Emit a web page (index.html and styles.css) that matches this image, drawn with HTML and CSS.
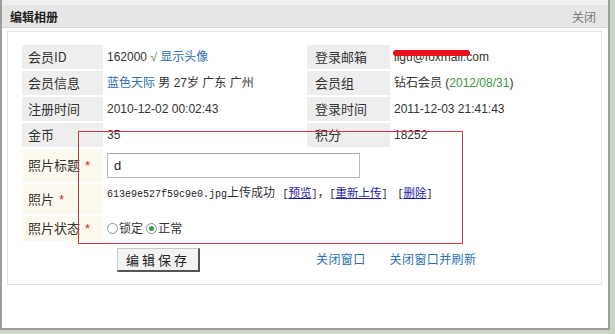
FILE: index.html
```html
<!DOCTYPE html>
<html>
<head>
<meta charset="utf-8">
<title>编辑相册</title>
<link rel="stylesheet" href="styles.css">
</head>
<body>
<div class="dialog">
  <div class="header">
    <span class="title">编辑相册</span>
    <span class="close">关闭</span>
  </div>
  <div class="panel">
    <table class="info">
      <colgroup><col class="c1"><col class="c2"><col class="c3"><col></colgroup>
      <tr class="r">
        <td class="lbl">会员ID</td>
        <td class="val">162000 <span class="ok">√</span> <a class="blue">显示头像</a></td>
        <td class="lbl lbl2">登录邮箱</td>
        <td class="val"><span class="email">ligu@foxmail.com<span class="redact"></span></span></td>
      </tr>
      <tr class="r">
        <td class="lbl">会员信息</td>
        <td class="val"><a class="blue">蓝色天际</a> 男 27岁 广东 广州</td>
        <td class="lbl lbl2">会员组</td>
        <td class="val">钻石会员 (<span class="green">2012/08/31</span>)</td>
      </tr>
      <tr class="r">
        <td class="lbl">注册时间</td>
        <td class="val">2010-12-02 00:02:43</td>
        <td class="lbl lbl2">登录时间</td>
        <td class="val">2011-12-03 21:41:43</td>
      </tr>
      <tr class="r">
        <td class="lbl">金币</td>
        <td class="val">35</td>
        <td class="lbl lbl2">积分</td>
        <td class="val">18252</td>
      </tr>
      <tr class="r5">
        <td class="lbl cream">照片标题<span class="star">*</span></td>
        <td class="val" colspan="3"><input class="text-input" type="text" value="d"></td>
      </tr>
      <tr class="r6">
        <td class="lbl cream">照片<span class="star">*</span></td>
        <td class="val top" colspan="3"><span class="mono">613e9e527f59c9e0.jpg</span>上传成功 <span class="gap"></span><span class="mono">[</span><a class="ul">预览</a><span class="mono">]</span>，<span class="mono">[</span><a class="ul">重新上传</a><span class="mono">]</span><span class="gap2"></span><span class="mono">[</span><a class="ul">删除</a><span class="mono">]</span></td>
      </tr>
      <tr class="r7">
        <td class="lbl cream">照片状态<span class="star">*</span></td>
        <td class="val" colspan="3"><span class="radio"></span>锁定 <span class="radio on"></span>正常</td>
      </tr>
      <tr class="rf">
        <td></td>
        <td class="val"><button class="btn" type="button">编辑保存</button></td>
        <td colspan="2" class="links"><a class="blue">关闭窗口</a><a class="blue">关闭窗口并刷新</a></td>
      </tr>
    </table>
  </div>
  <div class="annot"></div>
</div>
</body>
</html>
```
FILE: styles.css
```css
html, body { margin: 0; padding: 0; }
body {
  background: #c9d6c4;
  font-family: "Liberation Sans", "Noto Sans CJK SC", sans-serif;
  font-size: 12px;
  color: #333;
}
.dialog {
  position: relative;
  width: 606px;
  height: 328px;
  border: 2px solid #9d9d9d;
  border-top: 0;
  background: #fff;
}
.header {
  height: 22px;
  border-top: 5px solid #efefef;
  border-bottom: 1px solid #dadada;
  background: #e6e6e6;
  display: flex;
  justify-content: space-between;
  align-items: center;
  padding: 0 12px 0 8px;
}
.title { font-weight: bold; color: #222; font-size: 12px; }
.close { color: #777; font-size: 12px; }
.panel {
  margin: 3px 6px 0 5px;
  border: 1px solid #e2e2e2;
  height: 254px;
  box-sizing: border-box;
  padding: 11px 12px 0 12px;
}
.info { border-collapse: separate; border-spacing: 2px; width: 572px; }
.c1 { width: 81px; }
.c2 { width: 200px; }
.c3 { width: 83px; }
.info td { padding: 0; line-height: 16px; vertical-align: middle; }
.r td { height: 24px; }
.r5 td { height: 33px; }
.r6 td { height: 29px; }
.r7 td { height: 25px; }
.rf td { height: 34px; }
.lbl {
  background: #eeeeee;
  padding-left: 6px !important;
  font-size: 13px;
  color: #333;
  font-family: "Noto Sans CJK SC", sans-serif;
}
.lbl2 { padding-left: 8px !important; }
.cream { background: #fcf9ee; }
.star { color: #e02020; margin-left: 5px; font-family: "Liberation Sans", sans-serif; }
.val { padding-left: 2px !important; color: #333; }
.info td.top { vertical-align: top; padding-top: 1px !important; }
.ok { color: #3c9a3c; }
.green { color: #3a9a3a; }
.blue { color: #2a70b5; text-decoration: none; }
.ul { color: #1c1ca8; text-decoration: underline; }
.r6 .ul { font-size: 11.5px; }
.email { position: relative; display: inline-block; }
.redact {
  position: absolute;
  left: -1px;
  top: 1px;
  width: 77px;
  height: 6px;
  border-radius: 3px;
  background: #e8111a;
}
.text-input {
  display: block;
  width: 253px;
  height: 25px;
  box-sizing: border-box;
  border: 1px solid #bcbcbc;
  border-top-color: #a8a8a8;
  padding: 0 6px;
  font-family: "Liberation Sans", sans-serif;
  font-size: 13px;
  color: #222;
  background: #fff;
  margin: 0;
}
.mono { font-family: "Liberation Mono", monospace; font-size: 10px; color: #222; }
.gap { display: inline-block; width: 4px; }
.gap2 { display: inline-block; width: 10px; }
.radio {
  display: inline-block;
  width: 11px;
  height: 11px;
  box-sizing: border-box;
  border: 1px solid #7a98b6;
  border-radius: 50%;
  background: #fff;
  position: relative;
  vertical-align: -1px;
  margin-right: 1px;
}
.radio.on::after {
  content: "";
  position: absolute;
  left: 2px;
  top: 2px;
  width: 5px;
  height: 5px;
  border-radius: 50%;
  background: #3ea03e;
}
.btn {
  margin-left: 10px;
  width: 83px;
  height: 24px;
  padding: 0;
  background: #f3f3f3;
  border: 1px solid #c8c8c8;
  border-right: 2px solid #555;
  border-bottom: 2px solid #555;
  font-family: "Noto Sans CJK SC", sans-serif;
  font-size: 13px;
  letter-spacing: 3px;
  color: #222;
  display: block;
}
.links { padding-left: 9px !important; }
.links .blue { letter-spacing: 0.4px; margin-right: 24px; }
.annot {
  position: absolute;
  left: 76px;
  top: 131px;
  width: 383px;
  height: 111px;
  border: 1px solid #d9363e;
  pointer-events: none;
}
```
